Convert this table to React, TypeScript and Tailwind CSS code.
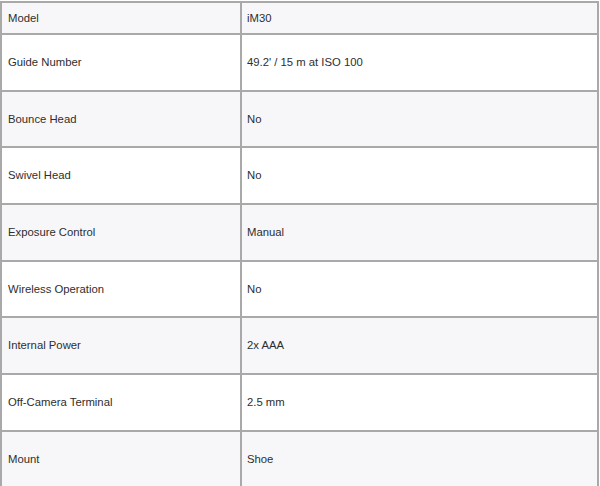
import React from "react";

const rows: [string, string][] = [
  ["Model", "iM30"],
  ["Guide Number", "49.2' / 15 m at ISO 100"],
  ["Bounce Head", "No"],
  ["Swivel Head", "No"],
  ["Exposure Control", "Manual"],
  ["Wireless Operation", "No"],
  ["Internal Power", "2x AAA"],
  ["Off-Camera Terminal", "2.5 mm"],
  ["Mount", "Shoe"],
];

export default function App() {
  return (
    <div
      className="w-[600px] h-[486px] overflow-hidden bg-white pt-[1px]"
      style={{ fontFamily: '"Liberation Sans", Arial, sans-serif' }}
    >
      <table className="w-[599px] border-collapse text-[11.3px] text-[#2e2e2e]">
        <tbody>
          {rows.map(([k, v], i) => (
            <tr
              key={k}
              className={i % 2 === 0 ? "bg-[#f7f7f9]" : "bg-white"}
            >
              <td
                className={`w-[240px] border-2 border-[#a9a9a9] px-[6px] py-0 align-middle ${
                  i === 0 ? "h-[32px]" : "h-[56.7px]"
                }`}
              >
                {k}
              </td>
              <td className="border-2 border-[#a9a9a9] px-[5px] py-0 align-middle">
                {v}
              </td>
            </tr>
          ))}
        </tbody>
      </table>
    </div>
  );
}
